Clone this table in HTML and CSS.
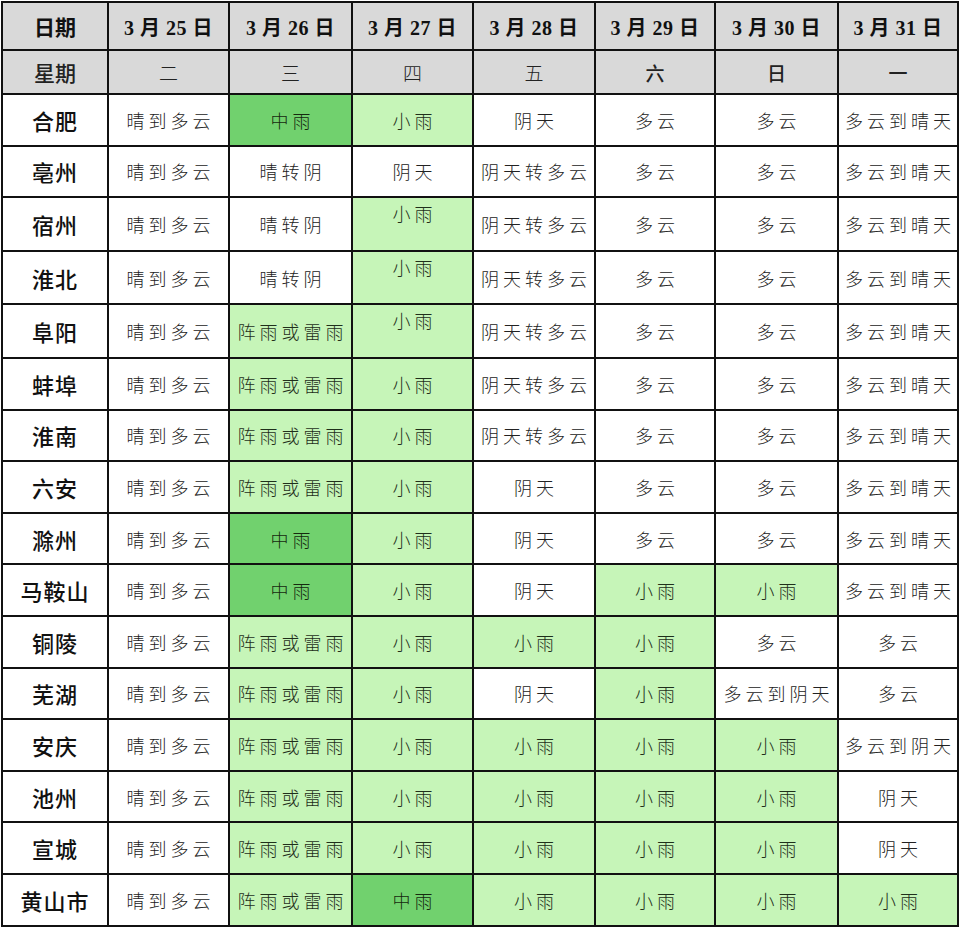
FILE: index.html
```html
<!DOCTYPE html>
<html lang="zh-CN">
<head>
<meta charset="utf-8">
<title>安徽天气预报</title>
<link rel="stylesheet" href="styles.css">
</head>
<body>
<table class="wx">
<colgroup>
<col class="c0"><col class="c1"><col class="c2"><col class="c3"><col class="c4"><col class="c5"><col class="c6"><col class="c7">
</colgroup>
<thead>
<tr class="hd1"><th class="city">日期</th><th>3 月 25 日</th><th>3 月 26 日</th><th>3 月 27 日</th><th>3 月 28 日</th><th>3 月 29 日</th><th>3 月 30 日</th><th>3 月 31 日</th></tr>
<tr class="hd2"><th class="city">星期</th><th class="wk">二</th><th class="wk">三</th><th class="wk">四</th><th class="wk">五</th><th class="wk b">六</th><th class="wk b">日</th><th class="wk b">一</th></tr>
</thead>
<tbody>
<tr><th class="city">合肥</th><td>晴到多云</td><td class="mid">中雨</td><td class="lt">小雨</td><td>阴天</td><td>多云</td><td>多云</td><td>多云到晴天</td></tr>
<tr><th class="city">亳州</th><td>晴到多云</td><td>晴转阴</td><td>阴天</td><td>阴天转多云</td><td>多云</td><td>多云</td><td>多云到晴天</td></tr>
<tr><th class="city">宿州</th><td>晴到多云</td><td>晴转阴</td><td class="lt top">小雨</td><td>阴天转多云</td><td>多云</td><td>多云</td><td>多云到晴天</td></tr>
<tr><th class="city">淮北</th><td>晴到多云</td><td>晴转阴</td><td class="lt top">小雨</td><td>阴天转多云</td><td>多云</td><td>多云</td><td>多云到晴天</td></tr>
<tr><th class="city">阜阳</th><td>晴到多云</td><td class="lt">阵雨或雷雨</td><td class="lt top">小雨</td><td>阴天转多云</td><td>多云</td><td>多云</td><td>多云到晴天</td></tr>
<tr><th class="city">蚌埠</th><td>晴到多云</td><td class="lt">阵雨或雷雨</td><td class="lt">小雨</td><td>阴天转多云</td><td>多云</td><td>多云</td><td>多云到晴天</td></tr>
<tr><th class="city">淮南</th><td>晴到多云</td><td class="lt">阵雨或雷雨</td><td class="lt">小雨</td><td>阴天转多云</td><td>多云</td><td>多云</td><td>多云到晴天</td></tr>
<tr><th class="city">六安</th><td>晴到多云</td><td class="lt">阵雨或雷雨</td><td class="lt">小雨</td><td>阴天</td><td>多云</td><td>多云</td><td>多云到晴天</td></tr>
<tr><th class="city">滁州</th><td>晴到多云</td><td class="mid">中雨</td><td class="lt">小雨</td><td>阴天</td><td>多云</td><td>多云</td><td>多云到晴天</td></tr>
<tr><th class="city">马鞍山</th><td>晴到多云</td><td class="mid">中雨</td><td class="lt">小雨</td><td>阴天</td><td class="lt">小雨</td><td class="lt">小雨</td><td>多云到晴天</td></tr>
<tr><th class="city">铜陵</th><td>晴到多云</td><td class="lt">阵雨或雷雨</td><td class="lt">小雨</td><td class="lt">小雨</td><td class="lt">小雨</td><td>多云</td><td>多云</td></tr>
<tr><th class="city">芜湖</th><td>晴到多云</td><td class="lt">阵雨或雷雨</td><td class="lt">小雨</td><td>阴天</td><td class="lt">小雨</td><td>多云到阴天</td><td>多云</td></tr>
<tr><th class="city">安庆</th><td>晴到多云</td><td class="lt">阵雨或雷雨</td><td class="lt">小雨</td><td class="lt">小雨</td><td class="lt">小雨</td><td class="lt">小雨</td><td>多云到阴天</td></tr>
<tr><th class="city">池州</th><td>晴到多云</td><td class="lt">阵雨或雷雨</td><td class="lt">小雨</td><td class="lt">小雨</td><td class="lt">小雨</td><td class="lt">小雨</td><td>阴天</td></tr>
<tr><th class="city">宣城</th><td>晴到多云</td><td class="lt">阵雨或雷雨</td><td class="lt">小雨</td><td class="lt">小雨</td><td class="lt">小雨</td><td class="lt">小雨</td><td>阴天</td></tr>
<tr><th class="city">黄山市</th><td>晴到多云</td><td class="lt">阵雨或雷雨</td><td class="mid">中雨</td><td class="lt">小雨</td><td class="lt">小雨</td><td class="lt">小雨</td><td class="lt">小雨</td></tr>
</tbody>
</table>
</body>
</html>
```
FILE: styles.css
```css
html, body {
  margin: 0;
  padding: 0;
  background: #ffffff;
}
body {
  padding: 1px 0 0 1px;
}
.wx {
  border-collapse: collapse;
  table-layout: fixed;
  width: 958px;
  font-family: "Liberation Serif", "Noto Sans CJK SC", serif;
}
.c0 { width: 106px; }
.c1 { width: 121px; }
.c2 { width: 123px; }
.c3 { width: 121px; }
.c4 { width: 122px; }
.c5 { width: 120px; }
.c6 { width: 123px; }
.c7 { width: 120px; }
.wx th, .wx td {
  border: 2px solid #111;
  padding: 0;
  text-align: center;
  vertical-align: middle;
  white-space: nowrap;
  overflow: hidden;
}
.hd1 th {
  height: 46px;
  background: #d9d9d9;
  font-size: 20px;
  font-weight: 700;
  color: #111;
  letter-spacing: 0.5px;
}
.hd2 th {
  height: 42px;
  background: #d9d9d9;
  color: #222;
}
.wk {
  font-family: "Noto Sans CJK SC", sans-serif;
  font-size: 19px;
  font-weight: 300;
}
.wk.b {
  font-weight: 500;
}
.city {
  font-family: "Noto Sans CJK SC", sans-serif;
  font-size: 22px;
  font-weight: 500;
  color: #111;
  letter-spacing: 1px;
}
.hd1 .city, .hd2 .city {
  font-size: 21px;
  letter-spacing: 0;
}
tbody th, tbody td {
  height: 49.6px;
}
.wx td {
  font-family: "Noto Sans CJK SC", sans-serif;
  font-size: 18px;
  font-weight: 300;
  color: #222;
  letter-spacing: 4px;
  text-indent: 4px;
}
.wx td.lt {
  background: #c6f5b8;
  color: #1f2f1b;
}
.wx td.mid {
  background: #71d16e;
  color: #16290f;
}
.wx td.top {
  vertical-align: top;
  padding-top: 2px;
}
```
